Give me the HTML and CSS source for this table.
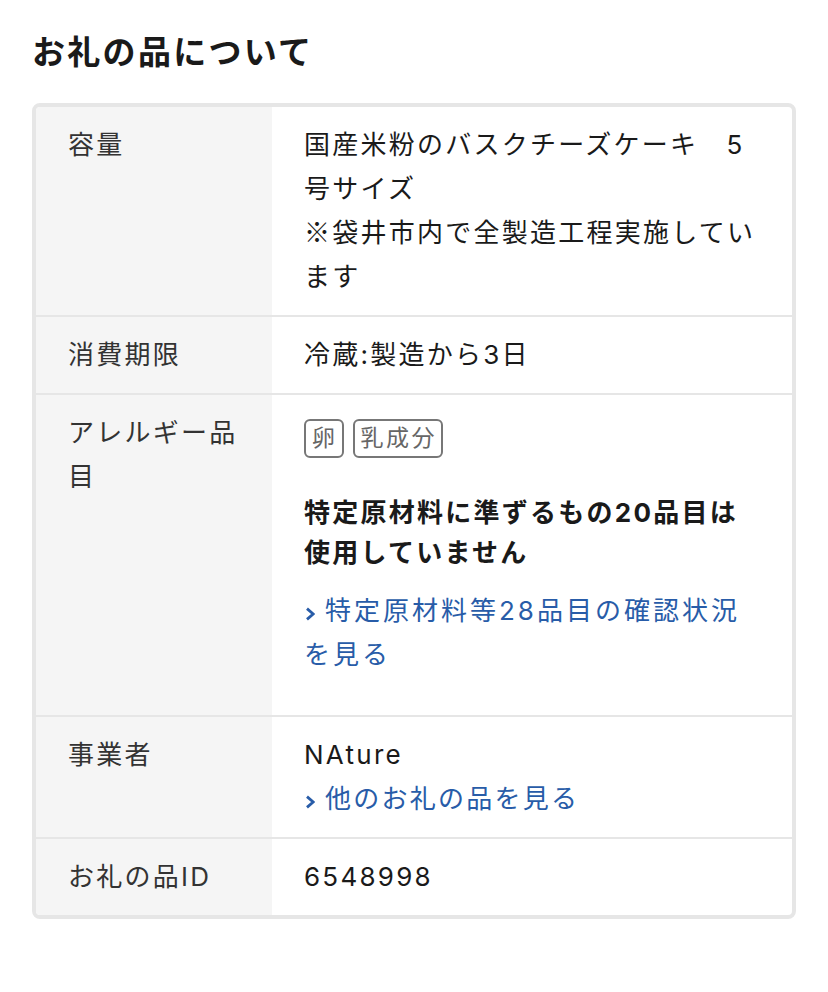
FILE: index.html
```html
<!DOCTYPE html>
<html lang="ja">
<head>
<meta charset="utf-8">
<title>お礼の品について</title>
<link rel="stylesheet" href="styles.css">
</head>
<body>
<section class="gift">
  <h1 class="title">お礼の品について</h1>
  <dl class="spec">
    <div class="row">
      <dt class="label">容量</dt>
      <dd class="value">国産米粉のバスクチーズケーキ　5号サイズ<br><span class="cjk">※袋井市内で全製造工程実施しています</span></dd>
    </div>
    <div class="row">
      <dt class="label">消費期限</dt>
      <dd class="value">冷蔵:製造から3日</dd>
    </div>
    <div class="row">
      <dt class="label">アレルギー品目</dt>
      <dd class="value">
        <div class="tags"><span class="tag">卵</span><span class="tag">乳成分</span></div>
        <p class="note">特定原材料に準ずるもの20品目は使用していません</p>
        <a class="link link-allergy" href="#"><svg class="chev" viewBox="0 0 10 14" width="10" height="14"><path d="M2 1.6l6.2 5.4-6.2 5.4" fill="none" stroke="currentColor" stroke-width="2.8"/></svg>特定原材料等28品目の確認状況を見る</a>
      </dd>
    </div>
    <div class="row">
      <dt class="label">事業者</dt>
      <dd class="value">NAture<br><a class="link" href="#"><svg class="chev" viewBox="0 0 10 14" width="10" height="14"><path d="M2 1.6l6.2 5.4-6.2 5.4" fill="none" stroke="currentColor" stroke-width="2.8"/></svg>他のお礼の品を見る</a></dd>
    </div>
    <div class="row">
      <dt class="label">お礼の品ID</dt>
      <dd class="value">6548998</dd>
    </div>
  </dl>
</section>
</body>
</html>
```

FILE: styles.css
```css
body {
  margin: 0;
  background: #fff;
  font-family: Inter, "Noto Sans CJK JP", sans-serif;
  color: #1a1a1a;
}

.gift {
  padding: 27px 32px 0;
}

.title {
  margin: 0 0 26px;
  font-size: 33px;
  line-height: 50px;
  font-weight: 700;
  letter-spacing: 2.3px;
  color: #1a1a1a;
}

.spec {
  margin: 0;
  border: 4px solid #e6e6e6;
  border-radius: 8px;
  overflow: hidden;
}

.row {
  display: grid;
  grid-template-columns: 236px 1fr;
  border-top: 2px solid #e6e6e6;
}

.row:first-child {
  border-top: 0;
}

.label,
.value {
  margin: 0;
  padding: 16px 32px;
  font-size: 26px;
  line-height: 44px;
  letter-spacing: 2.25px;
}

.label {
  background: #f5f5f5;
  color: #333;
}

.value {
  color: #1a1a1a;
}

.cjk {
  font-family: "Noto Sans CJK JP", sans-serif;
  line-height: 1;
}

.tags {
  display: flex;
  gap: 9px;
  margin-top: 8px;
}

.tag {
  border: 2px solid #777;
  border-radius: 6px;
  font-size: 23px;
  line-height: 35px;
  letter-spacing: 2.5px;
  padding: 0 4px 0 6px;
  color: #666;
}

.note {
  margin: 35px 0 0;
  font-weight: 700;
  line-height: 40px;
}

.link {
  color: #285ca8;
  text-decoration: none;
}

.link-allergy {
  display: block;
  margin: 16px 0 22px;
  letter-spacing: 3px;
}

.chev {
  display: inline-block;
  vertical-align: -1px;
  margin: 0 10px 0 1px;
}
```
